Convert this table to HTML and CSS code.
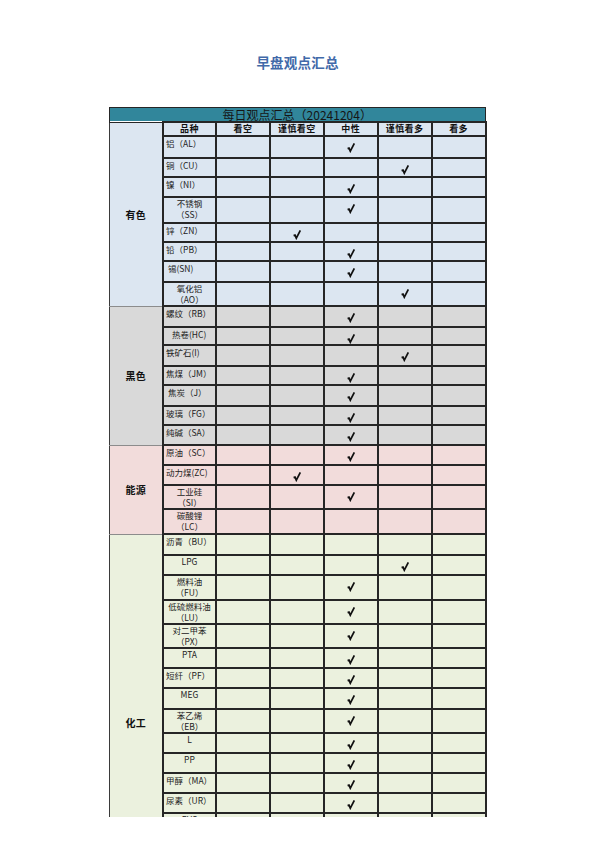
FILE: index.html
```html
<!DOCTYPE html>
<html lang="zh">
<head>
<meta charset="utf-8">
<title>早盘观点汇总</title>
<link rel="stylesheet" href="styles.css">
</head>
<body>
<div class="page">
  <h1 class="title">早盘观点汇总</h1>
  <table class="grid">
    <colgroup>
      <col class="c-cat"><col class="c-name"><col><col><col><col><col>
    </colgroup>
    <tbody class="g-yx">
      <tr class="cap"><th colspan="7">每日观点汇总（20241204）</th></tr>
      <tr class="head">
        <td class="cat" rowspan="9">有色</td>
        <th>品种</th><th>看空</th><th>谨慎看空</th><th>中性</th><th>谨慎看多</th><th>看多</th>
      </tr>
      <tr class="h22"><td class="n">铝（AL）</td><td></td><td></td><td class="k"><i></i></td><td></td><td></td></tr>
      <tr class="h19"><td class="n">铜（CU）</td><td></td><td></td><td></td><td class="k"><i></i></td><td></td></tr>
      <tr class="h20"><td class="n">镍（NI）</td><td></td><td></td><td class="k"><i></i></td><td></td><td></td></tr>
      <tr class="h26"><td class="n c">不锈钢<br>（SS）</td><td></td><td></td><td class="k"><i></i></td><td></td><td></td></tr>
      <tr class="h19"><td class="n">锌（ZN）</td><td></td><td class="k"><i></i></td><td></td><td></td><td></td></tr>
      <tr class="h19"><td class="n">铅（PB）</td><td></td><td></td><td class="k"><i></i></td><td></td><td></td></tr>
      <tr class="h21"><td class="n">&nbsp;锡(SN)</td><td></td><td></td><td class="k"><i></i></td><td></td><td></td></tr>
      <tr class="h24"><td class="n c">氧化铝<br>（AO）</td><td></td><td></td><td></td><td class="k"><i></i></td><td></td></tr>
    </tbody>
    <tbody class="g-hs">
      <tr class="h21"><td class="cat" rowspan="7">黑色</td><td class="n">螺纹（RB）</td><td></td><td></td><td class="k"><i></i></td><td></td><td></td></tr>
      <tr class="h18"><td class="n in">热卷(HC)</td><td></td><td></td><td class="k"><i></i></td><td></td><td></td></tr>
      <tr class="h21"><td class="n">铁矿石(I)</td><td></td><td></td><td></td><td class="k"><i></i></td><td></td></tr>
      <tr class="h19"><td class="n">焦煤（JM）</td><td></td><td></td><td class="k"><i></i></td><td></td><td></td></tr>
      <tr class="h21"><td class="n">&nbsp;焦炭（J）</td><td></td><td></td><td class="k"><i></i></td><td></td><td></td></tr>
      <tr class="h19"><td class="n">玻璃（FG）</td><td></td><td></td><td class="k"><i></i></td><td></td><td></td></tr>
      <tr class="h20"><td class="n">纯碱（SA）</td><td></td><td></td><td class="k"><i></i></td><td></td><td></td></tr>
    </tbody>
    <tbody class="g-ny">
      <tr class="h20"><td class="cat" rowspan="4">能源</td><td class="n">原油（SC）</td><td></td><td></td><td class="k"><i></i></td><td></td><td></td></tr>
      <tr class="h20"><td class="n">动力煤(ZC)</td><td></td><td class="k"><i></i></td><td></td><td></td><td></td></tr>
      <tr class="h24"><td class="n c">工业硅<br>（SI）</td><td></td><td></td><td class="k"><i></i></td><td></td><td></td></tr>
      <tr class="h25"><td class="n c">碳酸锂<br>（LC）</td><td></td><td></td><td></td><td></td><td></td></tr>
    </tbody>
    <tbody class="g-hg">
      <tr class="h21"><td class="cat" rowspan="18">化工</td><td class="n">沥青（BU）</td><td></td><td></td><td></td><td></td><td></td></tr>
      <tr class="h20"><td class="n c">LPG</td><td></td><td></td><td></td><td class="k"><i></i></td><td></td></tr>
      <tr class="h25"><td class="n c">燃料油<br>（FU）</td><td></td><td></td><td class="k"><i></i></td><td></td><td></td></tr>
      <tr class="h23"><td class="n c">低硫燃料油<br>（LU）</td><td></td><td></td><td class="k"><i></i></td><td></td><td></td></tr>
      <tr class="h24"><td class="n c">对二甲苯<br>（PX）</td><td></td><td></td><td class="k"><i></i></td><td></td><td></td></tr>
      <tr class="h20"><td class="n c">PTA</td><td></td><td></td><td class="k"><i></i></td><td></td><td></td></tr>
      <tr class="h20"><td class="n">短纤（PF）</td><td></td><td></td><td class="k"><i></i></td><td></td><td></td></tr>
      <tr class="h21"><td class="n c">MEG</td><td></td><td></td><td class="k"><i></i></td><td></td><td></td></tr>
      <tr class="h24"><td class="n c">苯乙烯<br>（EB）</td><td></td><td></td><td class="k"><i></i></td><td></td><td></td></tr>
      <tr class="h20"><td class="n c">L</td><td></td><td></td><td class="k"><i></i></td><td></td><td></td></tr>
      <tr class="h20"><td class="n c">PP</td><td></td><td></td><td class="k"><i></i></td><td></td><td></td></tr>
      <tr class="h20"><td class="n">甲醇（MA）</td><td></td><td></td><td class="k"><i></i></td><td></td><td></td></tr>
      <tr class="h20"><td class="n">尿素（UR）</td><td></td><td></td><td class="k"><i></i></td><td></td><td></td></tr>
      <tr class="h20"><td class="n c">PVC</td><td></td><td></td><td class="k"><i></i></td><td></td><td></td></tr>
      <tr class="h20"><td class="n">烧碱（SH）</td><td></td><td></td><td class="k"><i></i></td><td></td><td></td></tr>
      <tr class="h20"><td class="n">纯苯（BZ）</td><td></td><td></td><td class="k"><i></i></td><td></td><td></td></tr>
      <tr class="h20"><td class="n">橡胶（RU）</td><td></td><td></td><td class="k"><i></i></td><td></td><td></td></tr>
      <tr class="h18"><td class="n">纸浆（SP）</td><td></td><td></td><td class="k"><i></i></td><td></td><td></td></tr>
    </tbody>
  </table>
</div>
</body>
</html>
```

FILE: styles.css
```css
html, body {
  margin: 0;
  padding: 0;
  background: #ffffff;
}

.page {
  width: 595px;
  height: 817px;
  overflow: hidden;
  font-family: "Noto Sans CJK SC", "Noto Sans", sans-serif;
  color: #111111;
}

.title {
  margin: 0;
  padding-top: 52px;
  height: 20px;
  line-height: 20px;
  margin-bottom: 35px;
  text-align: center;
  font-size: 13.5px;
  font-weight: 700;
  color: #4169a9;
  letter-spacing: 0.2px;
}

.grid {
  width: 378px;
  margin: 0 auto;
  table-layout: fixed;
  border-collapse: collapse;
}

.c-cat { width: 54px; }
.c-name { width: 53px; }

.grid th,
.grid td {
  border: 2px solid #262626;
  padding: 0;
  vertical-align: top;
  overflow: hidden;
}

.cap th {
  height: 13px;
  background: #31869b;
  font-size: 12px;
  line-height: 13px;
  font-weight: 400;
  text-align: center;
  color: #161616;
  border: 1.5px solid #262626;
}

.head th {
  height: 12px;
  font-size: 9px;
  line-height: 12px;
  font-weight: 700;
  text-align: center;
  letter-spacing: 0.4px;
}

.grid .cat {
  border-left: 1px solid #3a3a3a;
  border-top: 1px solid #8c8c8c;
  border-bottom: 1px solid #8c8c8c;
  vertical-align: middle;
  text-align: center;
  font-size: 10px;
  font-weight: 700;
  letter-spacing: 0.3px;
}

.g-yx .cat { border-top: 1.5px solid #262626; }

.n {
  font-size: 8.5px;
  line-height: 11px;
  padding: 1px 0 0 2px !important;
  white-space: nowrap;
  color: #222222;
}

.n.c {
  text-align: center;
  padding: 0 !important;
}

.n.in {
  padding-left: 8px !important;
}

.k {
  text-align: center;
}

.k i {
  display: block;
  width: 8px;
  height: 10px;
  margin: 6px auto 0;
  background: no-repeat center / 8px 10px url("data:image/svg+xml,%3Csvg xmlns='http://www.w3.org/2000/svg' viewBox='0 0 8 10'%3E%3Cpath d='M0.6 5.6 L2 5.1 L3.3 8.2 L7.3 0.4' fill='none' stroke='%23111' stroke-width='1.7' stroke-linejoin='miter'/%3E%3C/svg%3E");
}

.g-yx td, .g-yx .head th { background: #dce6f1; }
.g-hs td { background: #d9d9d9; }
.g-ny td { background: #f2dcdb; }
.g-hg td { background: #ebf1de; }

.h18 { height: 18px; }
.h19 { height: 19px; }
.h20 { height: 20px; }
.h21 { height: 21px; }
.h22 { height: 22px; }
.h23 { height: 23px; }
.h24 { height: 24px; }
.h25 { height: 25px; }
.h26 { height: 26px; }
```
